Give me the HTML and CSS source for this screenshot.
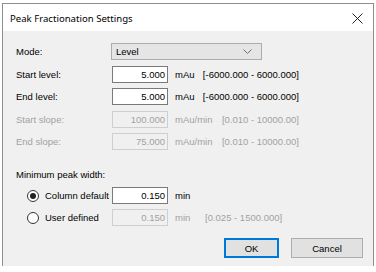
FILE: index.html
```html
<!DOCTYPE html>
<html lang="en">
<head>
  <meta charset="UTF-8">
  <title>Peak Fractionation Settings</title>
  <link rel="stylesheet" href="styles.css">
</head>
<body>
  <div class="dialog">
    <div class="titlebar">
      <span class="title">Peak Fractionation Settings</span>
      <svg class="close" width="11" height="11" viewBox="0 0 11 11">
        <path d="M0.5 0.5 L10.5 10.5 M10.5 0.5 L0.5 10.5" stroke="#222" stroke-width="1" fill="none"/>
      </svg>
    </div>

    <div class="content">
      <div class="fields">
        <label>Mode:</label>
        <div class="combo">
          <span>Level</span>
          <svg width="9" height="6" viewBox="0 0 9 6">
            <path d="M0.5 0.5 L4.5 4.5 L8.5 0.5" stroke="#707070" stroke-width="1" fill="none"/>
          </svg>
        </div>

        <label>Start level:</label>
        <div class="box">5.000</div>
        <div class="meta">
          <span class="unit">mAu</span>
          <span>[-6000.000 - 6000.000]</span>
        </div>

        <label>End level:</label>
        <div class="box">5.000</div>
        <div class="meta">
          <span class="unit">mAu</span>
          <span>[-6000.000 - 6000.000]</span>
        </div>

        <label class="off">Start slope:</label>
        <div class="box off">100.000</div>
        <div class="meta off">
          <span class="unit">mAu/min</span>
          <span>[0.010 - 10000.00]</span>
        </div>

        <label class="off">End slope:</label>
        <div class="box off">75.000</div>
        <div class="meta off">
          <span class="unit">mAu/min</span>
          <span>[0.010 - 10000.00]</span>
        </div>
      </div>

      <div class="peak">
        <label class="wide">Minimum peak width:</label>

        <label class="radio"><span class="dot checked"></span>Column default</label>
        <div class="box">0.150</div>
        <div class="meta">
          <span class="unit fixed">min</span>
        </div>

        <label class="radio"><span class="dot"></span>User defined</label>
        <div class="box off">0.150</div>
        <div class="meta off">
          <span class="unit fixed">min</span>
          <span>[0.025 - 1500.000]</span>
        </div>
      </div>

      <div class="buttons">
        <button class="ok">OK</button>
        <button class="cancel">Cancel</button>
      </div>
    </div>
  </div>
</body>
</html>
```

FILE: styles.css
```css
body {
  margin: 0;
  background: #fff;
  font-family: "Liberation Sans", Arial, sans-serif;
  font-size: 9.5px;
  color: #000;
}

.dialog {
  margin: 3px 0 0 2px;
  width: 372px;
  height: 263px;
  box-sizing: border-box;
  border: 1px solid #8e8e8e;
  border-bottom: none;
  background: #f0f0f0;
}

.titlebar {
  height: 27px;
  background: #fff;
  display: flex;
  align-items: center;
  justify-content: space-between;
  padding: 0 10px 0 7px;
}

.title {
  font-family: "Noto Sans", sans-serif;
  font-size: 9.6px;
  padding-top: 1px;
}

.close {
  margin-top: 1px;
}

.content {
  padding: 12px 10px 0 13px;
}

.fields, .peak {
  display: grid;
  grid-template-columns: 96px 56px 131px;
  align-items: center;
}

.fields {
  grid-template-rows: repeat(5, 17px);
  row-gap: 5.5px;
}

.peak {
  grid-template-rows: 16px 17px 17px;
  row-gap: 5px;
  margin-top: 16px;
}

.wide {
  grid-column: 1 / -1;
}

.combo {
  grid-column: 2 / 4;
  width: 151px;
  height: 17px;
  box-sizing: border-box;
  border: 1px solid #adadad;
  background: #e5e5e5;
  display: flex;
  align-items: center;
  justify-content: space-between;
  padding: 0 9px 0 4px;
  margin-left: -1px;
}

.box {
  height: 17px;
  box-sizing: border-box;
  border: 1px solid #7a7a7a;
  background: #fff;
  text-align: right;
  padding: 0 2px;
  line-height: 15px;
}

.box.off {
  border-color: #cfcfcf;
  background: #f0f0f0;
}

.meta {
  display: flex;
  justify-content: space-between;
  white-space: nowrap;
}

.unit {
  padding-left: 7px;
}

.unit.fixed {
  width: 30px;
}

.peak .meta {
  justify-content: flex-start;
}

.off {
  color: #a2a2a2;
}

.radio {
  display: flex;
  align-items: center;
  padding-left: 11px;
}

.dot {
  width: 12px;
  height: 12px;
  box-sizing: border-box;
  border: 1px solid #333;
  border-radius: 50%;
  background: #fff;
  margin-right: 6px;
  display: flex;
  align-items: center;
  justify-content: center;
}

.dot.checked::after {
  content: "";
  width: 6px;
  height: 6px;
  border-radius: 50%;
  background: #222;
}

.buttons {
  display: flex;
  justify-content: flex-end;
  gap: 12px;
  margin-top: 12px;
}

button {
  font-family: "Liberation Sans", Arial, sans-serif;
  font-size: 9.5px;
  height: 20px;
  background: #e1e1e1;
  border: 1px solid #adadad;
  padding: 0;
  color: #000;
}

.ok {
  width: 55px;
  border: 2px solid #0078d7;
}

.cancel {
  width: 72px;
}
```
